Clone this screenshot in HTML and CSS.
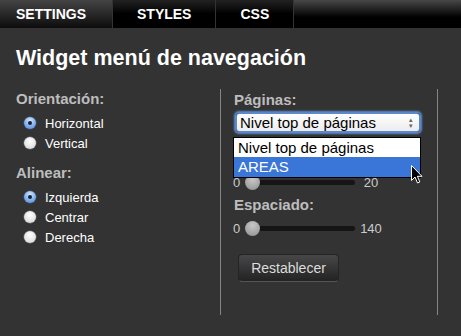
FILE: index.html
```html
<!DOCTYPE html>
<html lang="es">
<head>
  <meta charset="UTF-8" />
  <title>Widget menú de navegación</title>
  <link rel="stylesheet" href="styles.css">
</head>
<body>
  <nav class="tabs">
    <a class="tab active" href="#">SETTINGS</a>
    <a class="tab" href="#">STYLES</a>
    <a class="tab" href="#">CSS</a>
    <span class="tab-rest"></span>
  </nav>

  <main class="panel">
    <h1 class="title">Widget menú de navegación</h1>

    <div class="columns">
      <section class="col col-left">
        <div class="group">
          <div class="label">Orientación:</div>
          <div class="radio-row"><span class="radio checked"></span>Horizontal</div>
          <div class="radio-row"><span class="radio"></span>Vertical</div>
        </div>
        <div class="group">
          <div class="label">Alinear:</div>
          <div class="radio-row"><span class="radio checked"></span>Izquierda</div>
          <div class="radio-row"><span class="radio"></span>Centrar</div>
          <div class="radio-row"><span class="radio"></span>Derecha</div>
        </div>
      </section>

      <section class="col col-right">
        <div class="label">Páginas:</div>
        <div class="select">
          <span>Nivel top de páginas</span>
          <span class="arrows">▴<br>▾</span>
        </div>

        <!-- label row hidden behind the open list -->
        <div class="label-space"></div>
        <div class="slider">
          <span class="min">0</span>
          <div class="track"><span class="thumb"></span></div>
          <span class="max">20</span>
        </div>

        <div class="label label-gap">Espaciado:</div>
        <div class="slider">
          <span class="min">0</span>
          <div class="track"><span class="thumb"></span></div>
          <span class="max">140</span>
        </div>

        <button class="btn">Restablecer</button>

        <ul class="dropdown">
          <li>Nivel top de páginas</li>
          <li class="selected">AREAS</li>
        </ul>
        <svg class="cursor" width="12" height="19" viewBox="0 0 12 19">
          <path d="M0.5 0.5 L0.5 15.5 L4 12 L6.5 18 L8.8 17 L6.4 11.3 L11 11.3 Z" fill="#000" stroke="#fff" stroke-width="1"/>
        </svg>
      </section>
    </div>
  </main>
</body>
</html>
```

FILE: styles.css
```css
* {
  margin: 0;
  padding: 0;
  box-sizing: border-box;
}

body {
  background: #333;
  font-family: 'Liberation Sans', Arial, sans-serif;
  color: #fff;
  width: 461px;
  height: 336px;
  overflow: hidden;
}

.tabs {
  display: flex;
  height: 28px;
  background: linear-gradient(#474747, #000 62%);
}

.tab {
  display: flex;
  align-items: center;
  padding: 0 24px;
  font-size: 14px;
  font-weight: 700;
  color: #fff;
  text-decoration: none;
  border-right: 1px solid #333;
  background: linear-gradient(#222, #000 50%);
}

.tab.active {
  padding-left: 16px;
  width: 113px;
  background: linear-gradient(#444, #0c0c0c);
}

.tab-rest {
  flex: 1;
}

.panel {
  padding: 0 16px;
}

.title {
  margin-top: 18px;
  font-size: 21.5px;
  line-height: 24px;
  font-weight: 700;
  color: #fff;
}

.columns {
  display: grid;
  grid-template-columns: 204px 218px;
  margin-top: 19px;
}

.label {
  font-size: 15px;
  line-height: 18px;
  font-weight: 700;
  color: #bdbdbd;
}

.col-left {
  padding-top: 1px;
}

.group + .group {
  margin-top: 11px;
}

.group .label {
  margin-bottom: 5px;
}

.radio-row {
  display: flex;
  align-items: center;
  height: 20px;
  padding-left: 8px;
  gap: 9px;
  font-size: 13px;
  color: #fff;
}

.radio {
  width: 12px;
  height: 12px;
  border-radius: 50%;
  background: radial-gradient(circle at 50% 35%, #fff, #e4e4e4 60%, #c8c8c8);
  box-shadow: 0 0 0 0.5px #777;
  position: relative;
}

.radio.checked {
  background: radial-gradient(circle at 50% 30%, #d5e6fb, #7aa9e8 60%, #4f86d6);
  box-shadow: 0 0 0 0.5px #3a63a3;
}

.radio.checked::after {
  content: "";
  position: absolute;
  left: 4px;
  top: 4px;
  width: 4px;
  height: 4px;
  border-radius: 50%;
  background: #14233a;
}

.col-right {
  position: relative;
  border-left: 1px solid #858585;
  border-right: 1px solid #858585;
  padding: 2px 0 33px 13px;
}

.select {
  display: flex;
  justify-content: space-between;
  align-items: center;
  width: 184px;
  height: 19px;
  margin: 4px 0 0 2px;
  padding: 0 6px 0 3px;
  border: 1px solid #5e88cc;
  border-radius: 3px;
  background: linear-gradient(#fff, #ececec);
  box-shadow: 0 0 2px 2px rgba(100, 155, 235, 0.85);
  color: #000;
  font-size: 15px;
  line-height: 17px;
}

.arrows {
  font-size: 7px;
  line-height: 6px;
  color: #666;
  text-align: center;
}

.label-space {
  height: 18px;
  margin-top: 18px;
}

.label-gap {
  margin-top: 6px;
}

.slider {
  display: flex;
  align-items: center;
  height: 16px;
  margin-top: 6px;
  font-size: 13px;
  color: #ccc;
}

.min {
  width: 7px;
  margin-left: -1px;
}

.track {
  position: relative;
  width: 110px;
  height: 5px;
  margin-left: 5px;
  border-radius: 3px;
  background: #151515;
}

.thumb {
  position: absolute;
  left: 0;
  top: -5px;
  width: 15px;
  height: 15px;
  border-radius: 50%;
  background: radial-gradient(circle at 50% 30%, #c8c8c8, #8e8e8e);
}

.max {
  width: 32px;
  text-align: center;
}

.btn {
  display: block;
  width: 101px;
  height: 28px;
  margin: 18px 0 0 4px;
  border: 1px solid #242424;
  border-bottom-color: #555;
  border-radius: 4px;
  background: linear-gradient(#474747, #232323);
  color: #ddd;
  font-family: inherit;
  font-size: 14px;
}

.dropdown {
  position: absolute;
  left: 12px;
  top: 48px;
  width: 188px;
  list-style: none;
  border: 1px solid #000;
  background: #fff;
  color: #000;
  font-size: 15px;
}

.dropdown li {
  height: 19px;
  line-height: 19px;
  padding-left: 4px;
}

.dropdown li.selected {
  height: 20px;
  background: #3a76d8;
  color: #fff;
}

.cursor {
  position: absolute;
  left: 190px;
  top: 76px;
}
```
